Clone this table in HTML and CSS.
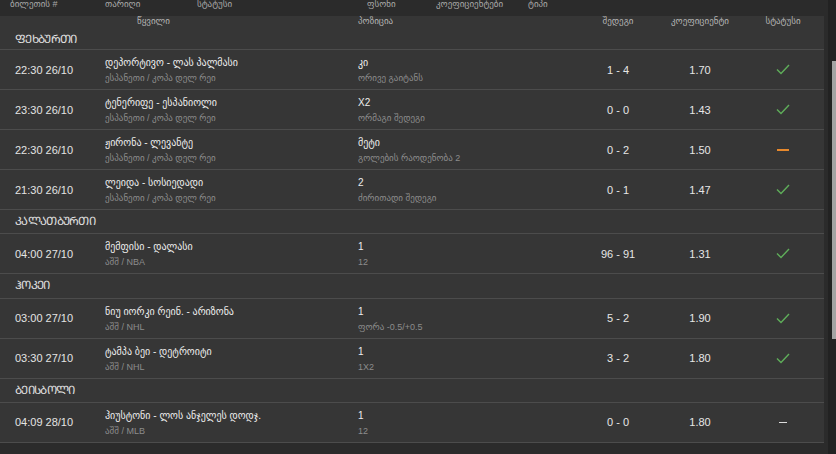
FILE: index.html
```html
<!DOCTYPE html>
<html lang="ka">
<head>
<meta charset="utf-8">
<link rel="stylesheet" href="styles.css">
</head>
<body>
<div class="page">
  <div class="main">
    <div class="topbar">
      <span>ბილეთის #</span><span>თარიღი</span><span>სტატუსი</span><span>ფსონი</span><span>კოეფიციენტები</span><span>ტიპი</span>
    </div>
    <div class="panel">
      <div class="grid colhead">
        <span></span><span class="ev-h">წყვილი</span><span>პოზიცია</span><span class="c">შედეგი</span><span class="c">კოეფიციენტი</span><span class="c">სტატუსი</span>
      </div>
      <div class="section first">ᲤᲔᲮᲑᲣᲠᲗᲘ</div>
      <div class="grid row">
        <div class="time">22:30 26/10</div>
        <div class="two"><div class="t">დეპორტივო - ლას პალმასი</div><div class="s">ესპანეთი / კოპა დელ რეი</div></div>
        <div class="two"><div class="t">კი</div><div class="s">ორივე გაიტანს</div></div>
        <div class="c num">1 - 4</div><div class="c num">1.70</div>
        <div class="c"><svg class="ok" width="14" height="11" viewBox="0 0 14 11"><polyline points="1,5.5 5,9.5 13,1" fill="none" stroke="#5fae5a" stroke-width="1.4"/></svg></div>
      </div>
      <div class="grid row">
        <div class="time">23:30 26/10</div>
        <div class="two"><div class="t">ტენერიფე - ესპანიოლი</div><div class="s">ესპანეთი / კოპა დელ რეი</div></div>
        <div class="two"><div class="t">X2</div><div class="s">ორმაგი შედეგი</div></div>
        <div class="c num">0 - 0</div><div class="c num">1.43</div>
        <div class="c"><svg class="ok" width="14" height="11" viewBox="0 0 14 11"><polyline points="1,5.5 5,9.5 13,1" fill="none" stroke="#5fae5a" stroke-width="1.4"/></svg></div>
      </div>
      <div class="grid row">
        <div class="time">22:30 26/10</div>
        <div class="two"><div class="t">ჟირონა - ლევანტე</div><div class="s">ესპანეთი / კოპა დელ რეი</div></div>
        <div class="two"><div class="t">მეტი</div><div class="s">გოლების რაოდენობა 2</div></div>
        <div class="c num">0 - 2</div><div class="c num">1.50</div>
        <div class="c"><span class="dash-or"></span></div>
      </div>
      <div class="grid row">
        <div class="time">21:30 26/10</div>
        <div class="two"><div class="t">ლეიდა - სოსიედადი</div><div class="s">ესპანეთი / კოპა დელ რეი</div></div>
        <div class="two"><div class="t">2</div><div class="s">ძირითადი შედეგი</div></div>
        <div class="c num">0 - 1</div><div class="c num">1.47</div>
        <div class="c"><svg class="ok" width="14" height="11" viewBox="0 0 14 11"><polyline points="1,5.5 5,9.5 13,1" fill="none" stroke="#5fae5a" stroke-width="1.4"/></svg></div>
      </div>
      <div class="section">ᲙᲐᲚᲐᲗᲑᲣᲠᲗᲘ</div>
      <div class="grid row">
        <div class="time">04:00 27/10</div>
        <div class="two"><div class="t">მემფისი - დალასი</div><div class="s">აშშ / NBA</div></div>
        <div class="two"><div class="t">1</div><div class="s">12</div></div>
        <div class="c num">96 - 91</div><div class="c num">1.31</div>
        <div class="c"><svg class="ok" width="14" height="11" viewBox="0 0 14 11"><polyline points="1,5.5 5,9.5 13,1" fill="none" stroke="#5fae5a" stroke-width="1.4"/></svg></div>
      </div>
      <div class="section">ᲰᲝᲙᲔᲘ</div>
      <div class="grid row">
        <div class="time">03:00 27/10</div>
        <div class="two"><div class="t">ნიუ იორკი რეინ. - არიზონა</div><div class="s">აშშ / NHL</div></div>
        <div class="two"><div class="t">1</div><div class="s">ფორა -0.5/+0.5</div></div>
        <div class="c num">5 - 2</div><div class="c num">1.90</div>
        <div class="c"><svg class="ok" width="14" height="11" viewBox="0 0 14 11"><polyline points="1,5.5 5,9.5 13,1" fill="none" stroke="#5fae5a" stroke-width="1.4"/></svg></div>
      </div>
      <div class="grid row">
        <div class="time">03:30 27/10</div>
        <div class="two"><div class="t">ტამპა ბეი - დეტროიტი</div><div class="s">აშშ / NHL</div></div>
        <div class="two"><div class="t">1</div><div class="s">1X2</div></div>
        <div class="c num">3 - 2</div><div class="c num">1.80</div>
        <div class="c"><svg class="ok" width="14" height="11" viewBox="0 0 14 11"><polyline points="1,5.5 5,9.5 13,1" fill="none" stroke="#5fae5a" stroke-width="1.4"/></svg></div>
      </div>
      <div class="section">ᲑᲔᲘᲡᲑᲝᲚᲘ</div>
      <div class="grid row">
        <div class="time">04:09 28/10</div>
        <div class="two"><div class="t">ჰიუსტონი - ლოს ანჯელეს დოდჯ.</div><div class="s">აშშ / MLB</div></div>
        <div class="two"><div class="t">1</div><div class="s">12</div></div>
        <div class="c num">0 - 0</div><div class="c num">1.80</div>
        <div class="c"><span class="dash-w"></span></div>
      </div>
    </div>
  </div>
  <div class="scrollbar"><div class="thumb"></div></div>
</div>
</body>
</html>
```
FILE: styles.css
```css
html, body {
  margin: 0;
  padding: 0;
  height: 100%;
  overflow: hidden;
}
body {
  background: #2b2b2b;
  font-family: "Liberation Sans", "DejaVu Sans", sans-serif;
  color: #e2e2e2;
}
.page {
  display: flex;
  height: 454px;
}
.main {
  width: 828px;
  display: flex;
  flex-direction: column;
}
.topbar {
  height: 16px;
  display: grid;
  grid-template-columns: 95px 92px 170px 69px 92px auto;
  padding-left: 10px;
  font-size: 9px;
  line-height: 9px;
  color: #a8a8a8;
  background: #2b2b2b;
}
.panel {
  width: 824px;
  background: #363636;
}
.grid {
  display: grid;
  grid-template-columns: 105px 253px 220px 80px 84px 82px;
}
.colhead {
  height: 10px;
  font-size: 9px;
  line-height: 10px;
  color: #b4b4b4;
}
.ev-h {
  padding-left: 32px;
}
.c {
  text-align: center;
  display: flex;
  justify-content: center;
  align-items: center;
}
.colhead .c {
  display: block;
}
.section {
  height: 23.33px;
  line-height: 23.33px;
  padding-left: 15px;
  font-size: 11.5px;
  letter-spacing: -0.7px;
  color: #e0e0e0;
  border-bottom: 1px solid #4c4c4c;
}
.section.first {
  height: 23px;
  line-height: 26px;
}
.row {
  height: 39px;
  border-bottom: 1px solid #4c4c4c;
  align-items: center;
}
.time {
  padding-left: 15px;
  font-size: 11px;
  color: #e4e4e4;
}
.two {
  display: flex;
  flex-direction: column;
  padding-top: 3px;
}
.t {
  font-size: 10px;
  line-height: 15px;
  color: #ededed;
}
.s {
  font-size: 9px;
  line-height: 17px;
  color: #8c8c8c;
}
.num {
  font-size: 11px;
  color: #e6e6e6;
}
.ok {
  display: block;
}
.dash-or {
  display: block;
  width: 12px;
  height: 2px;
  background: #e8892c;
}
.dash-w {
  display: block;
  width: 8px;
  height: 1px;
  background: #dcdcdc;
}
.scrollbar {
  width: 8px;
  background: #222;
  display: flex;
  justify-content: flex-end;
}
.thumb {
  width: 4px;
  height: 278px;
  margin-top: 61px;
  background: #a3a3a3;
}
```
